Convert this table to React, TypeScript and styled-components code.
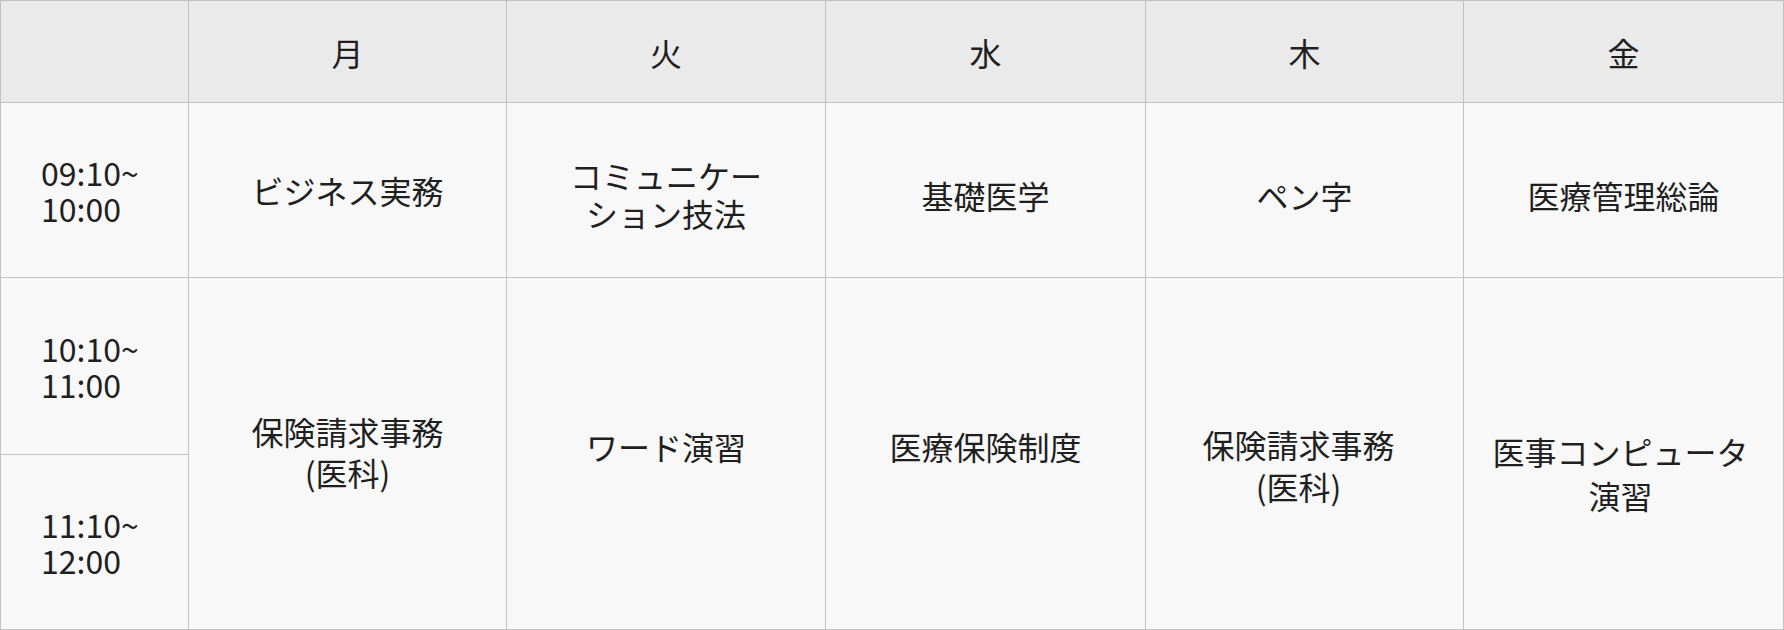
import React from "react";
import styled, { createGlobalStyle } from "styled-components";

const GlobalStyle = createGlobalStyle`
  html, body {
    margin: 0;
    padding: 0;
    background: #ffffff;
  }
  body {
    font-family: "Noto Sans CJK JP", "Noto Sans", sans-serif;
    color: #1f1f1f;
  }
`;

const Table = styled.div`
  display: grid;
  grid-template-columns: 187px 317px 318px 319px 317px 319px;
  grid-template-rows: 101px 174px 176px 174px;
  gap: 1px;
  width: 1784px;
  box-sizing: border-box;
  background: #c2c2c2;
  border: 1px solid #c2c2c2;
`;

const HeaderCell = styled.div`
  display: flex;
  align-items: center;
  justify-content: center;
  background: #eaeaea;
  font-size: 32px;
  line-height: 38px;
`;

const TimeCell = styled.div`
  display: flex;
  align-items: center;
  justify-content: flex-start;
  box-sizing: border-box;
  padding-left: 40px;
  background: #f8f8f8;
`;

const TimeText = styled.div`
  font-size: 32px;
  line-height: 36px;
  text-align: left;
`;

const SubjectCell = styled.div<{ $span?: number; $lh?: number; $dy?: number; $dx?: number }>`
  display: flex;
  align-items: center;
  justify-content: center;
  box-sizing: border-box;
  background: #f8f8f8;
  grid-row: span ${(p) => p.$span ?? 1};
  font-size: 32px;
  line-height: ${(p) => p.$lh ?? 38}px;
  text-align: center;
  padding-top: ${(p) => Math.max(0, 2 * (p.$dy ?? 0))}px;
  padding-bottom: ${(p) => Math.max(0, -2 * (p.$dy ?? 0))}px;
  padding-left: ${(p) => Math.max(0, 2 * (p.$dx ?? 0))}px;
  padding-right: ${(p) => Math.max(0, -2 * (p.$dx ?? 0))}px;
`;

const days = ["月", "火", "水", "木", "金"];

type Subject = { lines: string[]; lh?: number; dy?: number; dx?: number };

const firstPeriod: Subject[] = [
  { lines: ["ビジネス実務"], dy: 0 },
  { lines: ["コミュニケー", "ション技法"], lh: 38.5, dy: 4 },
  { lines: ["基礎医学"], dy: 4.5 },
  { lines: ["ペン字"], dy: 4.5 },
  { lines: ["医療管理総論"], dy: 4.5 },
];

const secondPeriod: Subject[] = [
  { lines: ["保険請求事務", "(医科)"], lh: 40.7, dy: -2 },
  { lines: ["ワード演習"], dy: -8 },
  { lines: ["医療保険制度"], dy: -8 },
  { lines: ["保険請求事務", "(医科)"], lh: 41.7, dy: 12.5, dx: -6 },
  { lines: ["医事コンピュータ", "演習"], lh: 43.3, dy: 20, dx: -3 },
];

const times = [
  ["09:10~", "10:00"],
  ["10:10~", "11:00"],
  ["11:10~", "12:00"],
];

const renderLines = (lines: string[]) =>
  lines.map((l, i) => (
    <React.Fragment key={i}>
      {i > 0 && <br />}
      {l}
    </React.Fragment>
  ));

const Time = ({ t }: { t: string[] }) => (
  <TimeCell>
    <TimeText>{renderLines(t)}</TimeText>
  </TimeCell>
);

export default function App() {
  return (
    <>
      <GlobalStyle />
      <Table>
        <HeaderCell />
        {days.map((d) => (
          <HeaderCell key={d}>{d}</HeaderCell>
        ))}

        <Time t={times[0]} />
        {firstPeriod.map((s, i) => (
          <SubjectCell key={`a${i}`} $lh={s.lh} $dy={s.dy} $dx={s.dx}>
            <div>{renderLines(s.lines)}</div>
          </SubjectCell>
        ))}

        <Time t={times[1]} />
        {secondPeriod.map((s, i) => (
          <SubjectCell key={`b${i}`} $span={2} $lh={s.lh} $dy={s.dy} $dx={s.dx}>
            <div>{renderLines(s.lines)}</div>
          </SubjectCell>
        ))}

        <Time t={times[2]} />
      </Table>
    </>
  );
}
